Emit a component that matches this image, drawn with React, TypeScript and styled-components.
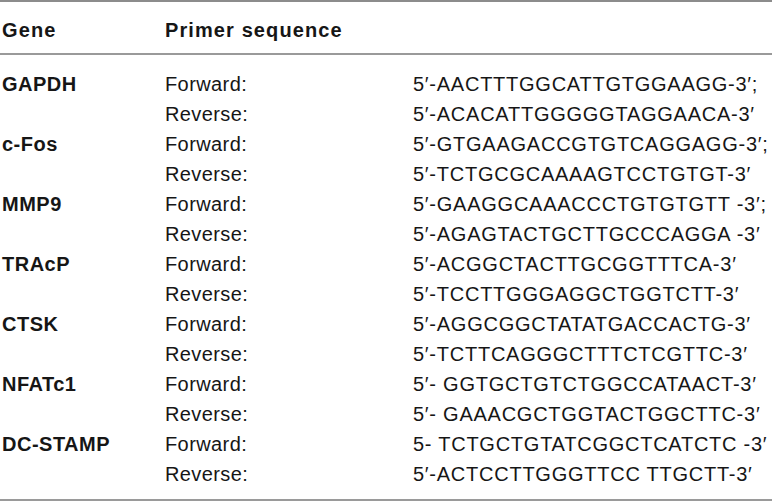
import React from "react";
import styled, { createGlobalStyle } from "styled-components";

const Global = createGlobalStyle`
  html, body { margin: 0; padding: 0; background: #ffffff; }
  body { font-family: "Liberation Sans", Arial, sans-serif; color: #161616; }
`;

const Table = styled.div`
  width: 772px;
  border-top: 2px solid #8c8c8c;
  border-bottom: 2px solid #9a9a9a;
  box-sizing: border-box;
`;

const Head = styled.div`
  padding: 13px 0 8px;
  border-bottom: 2px solid #9a9a9a;
`;

const Body = styled.div`
  padding: 14px 0 10px;
`;

const Row = styled.div`
  display: grid;
  grid-template-columns: 163px 248px 1fr;
  padding-left: 2px;
  height: 30px;
  line-height: 30px;
  font-size: 20px;
  white-space: pre;
`;

const Gene = styled.div`
  font-weight: 700;
  letter-spacing: 0.5px;
`;

const HeadCell = styled.div<{ $span?: boolean }>`
  font-weight: 700;
  letter-spacing: 1.1px;
  grid-column: ${(p) => (p.$span ? "2 / 4" : "auto")};
`;

const Kind = styled.div`
  letter-spacing: 0.4px;
`;

const Seq = styled.div`
  letter-spacing: 0.75px;
`;

type Primer = { gene: string; fwd: string; rev: string };

const data: Primer[] = [
  { gene: "GAPDH", fwd: "5′-AACTTTGGCATTGTGGAAGG-3′;", rev: "5′-ACACATTGGGGGTAGGAACA-3′" },
  { gene: "c-Fos", fwd: "5′-GTGAAGACCGTGTCAGGAGG-3′;", rev: "5′-TCTGCGCAAAAGTCCTGTGT-3′" },
  { gene: "MMP9", fwd: "5′-GAAGGCAAACCCTGTGTGTT -3′;", rev: "5′-AGAGTACTGCTTGCCCAGGA -3′" },
  { gene: "TRAcP", fwd: "5′-ACGGCTACTTGCGGTTTCA-3′", rev: "5′-TCCTTGGGAGGCTGGTCTT-3′" },
  { gene: "CTSK", fwd: "5′-AGGCGGCTATATGACCACTG-3′", rev: "5′-TCTTCAGGGCTTTCTCGTTC-3′" },
  { gene: "NFATc1", fwd: "5′- GGTGCTGTCTGGCCATAACT-3′", rev: "5′- GAAACGCTGGTACTGGCTTC-3′" },
  { gene: "DC-STAMP", fwd: "5- TCTGCTGTATCGGCTCATCTC -3′", rev: "5′-ACTCCTTGGGTTCC TTGCTT-3′" },
];

export default function App() {
  return (
    <>
      <Global />
      <Table>
        <Head>
          <Row>
            <HeadCell>Gene</HeadCell>
            <HeadCell $span>Primer sequence</HeadCell>
          </Row>
        </Head>
        <Body>
          {data.map((d) => (
            <React.Fragment key={d.gene}>
              <Row>
                <Gene>{d.gene}</Gene>
                <Kind>Forward:</Kind>
                <Seq>{d.fwd}</Seq>
              </Row>
              <Row>
                <Gene />
                <Kind>Reverse:</Kind>
                <Seq>{d.rev}</Seq>
              </Row>
            </React.Fragment>
          ))}
        </Body>
      </Table>
    </>
  );
}
